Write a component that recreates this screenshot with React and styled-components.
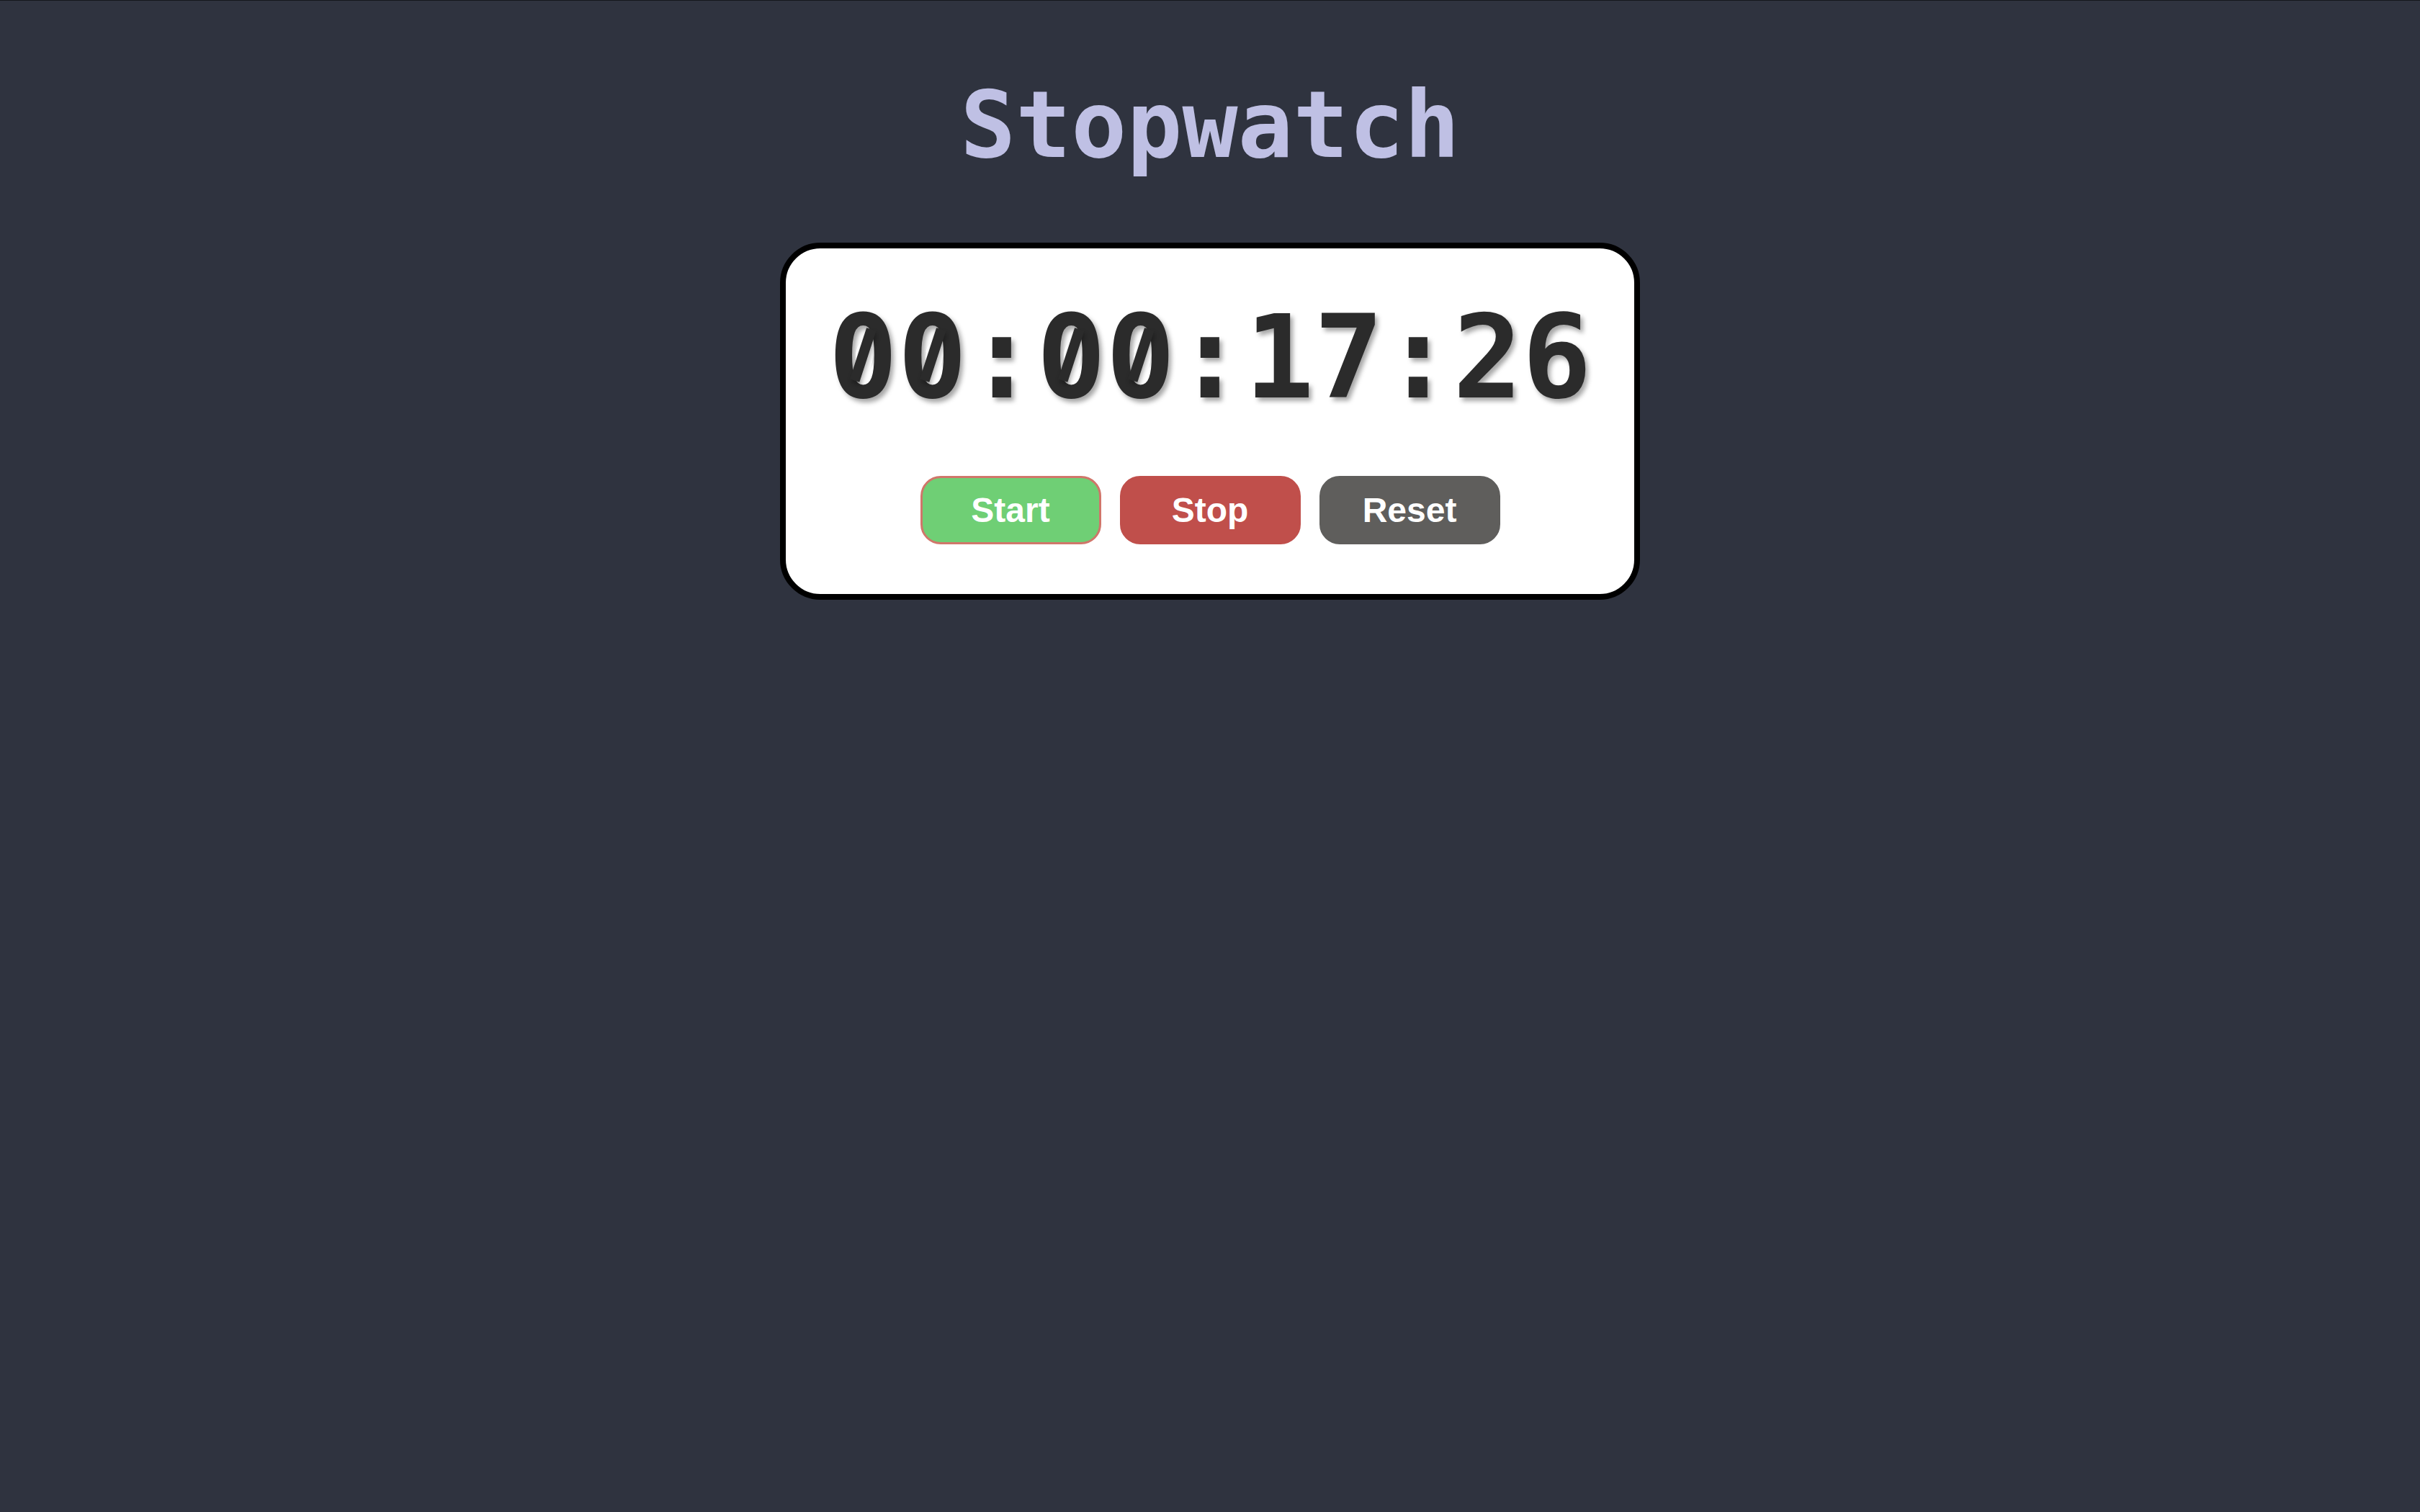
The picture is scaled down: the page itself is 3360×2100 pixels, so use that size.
import React from "react";
import styled, { createGlobalStyle } from "styled-components";

const GlobalStyle = createGlobalStyle`
  html, body {
    margin: 0;
    padding: 0;
    background: #2f333f;
  }
  body {
    border-top: 1px solid #15171c;
    min-height: 2099px;
  }
`;

const Page = styled.main`
  display: flex;
  flex-direction: column;
  align-items: center;
  padding-top: 109px;
`;

const Title = styled.h1`
  margin: 0 0 99px;
  font-family: "DejaVu Sans Mono", monospace;
  font-weight: 700;
  font-size: 128px;
  line-height: 1;
  color: #bfc0e4;
`;

const Card = styled.section`
  box-sizing: border-box;
  width: 1194px;
  background: #ffffff;
  border: 8px solid #000000;
  border-radius: 56px;
  padding: 72px 0 69px;
  display: flex;
  flex-direction: column;
  align-items: center;
`;

const Time = styled.div`
  font-family: "DejaVu Sans Mono", monospace;
  font-weight: 700;
  font-size: 160px;
  line-height: 1;
  color: #2b2b2b;
  text-shadow: 4px 5px 6px rgba(0, 0, 0, 0.35);
  margin-bottom: 84px;
  white-space: nowrap;
`;

/* Menlo-style slashed zero drawn over DejaVu's dotted zero */
const Zero = styled.span`
  position: relative;

  &::before {
    content: "";
    position: absolute;
    left: 50%;
    top: 0.5635em;
    width: 0.15em;
    height: 0.27em;
    border-radius: 50%;
    background: #ffffff;
    transform: translate(-50%, -50%) translate(0.012em, 0.015em);
  }

  &::after {
    content: "";
    position: absolute;
    left: 50%;
    top: 0.5635em;
    width: 0.085em;
    height: 0.47em;
    background: #2b2b2b;
    box-shadow: 3px 4px 6px rgba(0, 0, 0, 0.3);
    transform: translate(-50%, -50%) rotate(18deg);
  }
`;

const Buttons = styled.div`
  display: flex;
  gap: 26px;
`;

const Button = styled.button`
  box-sizing: border-box;
  width: 251px;
  height: 95px;
  border-radius: 28px;
  border: 3px solid ${(p) => p.$border || p.$bg};
  background: ${(p) => p.$bg};
  color: #ffffff;
  font-family: "Liberation Sans", Arial, sans-serif;
  font-weight: 700;
  font-size: 48px;
  padding: 0;
  cursor: pointer;
  display: flex;
  align-items: center;
  justify-content: center;
`;

function TimeDisplay({ value }) {
  return (
    <Time>
      {value.split("").map((ch, i) =>
        ch === "0" ? <Zero key={i}>0</Zero> : <React.Fragment key={i}>{ch}</React.Fragment>
      )}
    </Time>
  );
}

export default function App() {
  return (
    <>
      <GlobalStyle />
      <Page>
        <Title>Stopwatch</Title>
        <Card>
          <TimeDisplay value="00:00:17:26" />
          <Buttons>
            <Button $bg="#6fcf75" $border="#d0766a">Start</Button>
            <Button $bg="#c04f4b">Stop</Button>
            <Button $bg="#5f5e5c">Reset</Button>
          </Buttons>
        </Card>
      </Page>
    </>
  );
}
